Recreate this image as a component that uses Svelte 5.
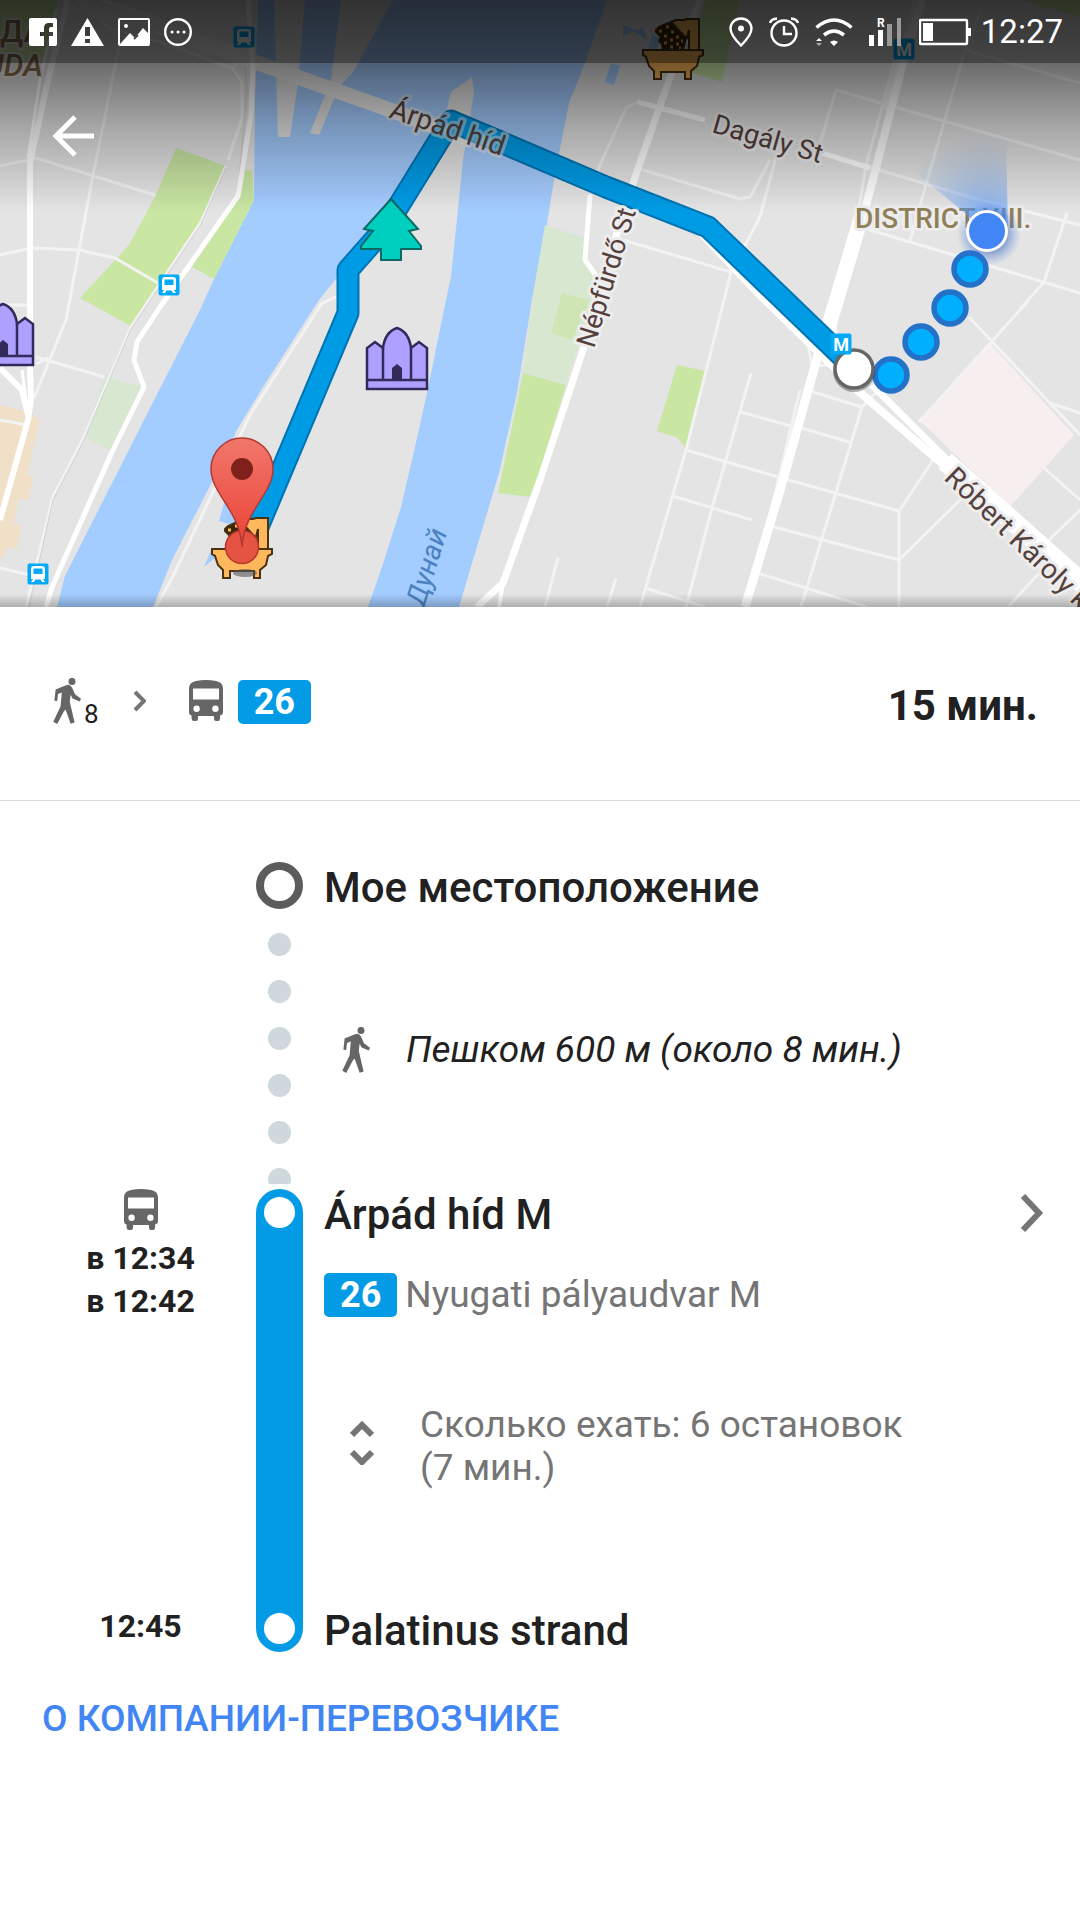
<script lang="ts">
  // Minor streets, drawn as thin pale lines.
  const streets = [
    'M0 166L28 160L36 158L155 195',
    'M119 47L92 180L66 320L34 398',
    'M0 255L31 248L79 250L115 258L158 283',
    'M0 305H30',
    'M36 357L104 377M36 364L48 358',
    'M0 420L26 425M0 568L30 575',
    'M226 166L201 222L131 327L84 437L53 497L26 607',
    'M64 12L78 4L110 28L160 42L232 68L240 62M232 68L242 82V118L228 160',
    'M85 0L125 22L180 36L246 60M100 0L150 16L210 40L250 56',
    'M336 297L322 303L250 415L172 578L156 607',
    'M585 260L590 197L599 167L626 108L638 102L705 120M822 153L970 197L1080 225',
    'M643 170L740 199L750 197L770 160',
    'M776 157L760 217L731 272L686 450L640 607',
    'M623 240L731 272',
    'M819 147L836 90L1080 160',
    'M981 10L965 50L910 240',
    'M965 50L1080 83',
    'M860 227L1080 293',
    'M915 0L885 110M895 60L866 165L858 215',
    'M1019 310L1044 282L1067 213',
    'M919 422L1029 300',
    'M969 317L1080 435',
    'M1050 403L1080 413',
    'M1044 468L1080 500M1046 543L1080 510',
    'M1039 573L1008 607',
    'M751 373L712 508L686 607',
    'M741 412L791 426M802 428L852 443',
    'M810 391L862 407L801 607M862 407L885 383',
    'M686 450L778 477L899 511V607M899 511L933 460',
    'M673 496L752 520',
    'M774 527L899 560L960 500',
    'M757 573L867 607M645 588L705 607',
    'M558 558L545 607M616 578L607 607',
    'M808 345L812 366L828 365M800 390L757 568'
  ];

  const route = 'M258 527L348 313V270L385 228L451 121L606 187L708 227L848 362';
  const walkDots = [[970, 269], [950, 308], [921, 342], [891, 375]];
  const stations = [[169, 285], [244, 37], [38, 574]];
  const castles = [[366, 327], [-28, 303]];
  const baths = [[642, 18], [211, 517]];

  let expanded = $state(false);
</script>

{#snippet walker()}
  <svg class="walker" viewBox="0 0 28 46" aria-hidden="true">
    <circle cx="19" cy="3.4" r="3.5" />
    <path d="M2.6 11.6L13 7.2Q17 5.9 19 9.4L22 16.3L28 20.8L26.8 23.6L19.6 20.4L17.6 16.8L16.8 24L21.6 44.6L17.6 45.8L12.6 31.5L10.8 33.4L4.2 46L0.3 43.8L7.6 28.2L8.8 14.4L5 15.9L4.2 23L1.4 22.8Z" />
  </svg>
{/snippet}

{#snippet bus()}
  <svg class="bus" viewBox="0 0 34 41" aria-hidden="true">
    <path fill-rule="evenodd" d="M0 9Q0 2 7 1Q17 -1 27 1Q34 2 34 9V32Q34 35 31 35.5V38.5Q31 41 29 41H27Q25 41 25 38.5V36H9V38.5Q9 41 7 41H5Q2.6 41 2.6 38.5V35.5Q0 35 0 32ZM4 8.5V19.5H30V8.5Z" />
    <circle class="lamp" cx="7.6" cy="28.8" r="3.2" />
    <circle class="lamp" cx="26.4" cy="28.8" r="3.2" />
  </svg>
{/snippet}

{#snippet metro(x: number, y: number)}
  <g transform="translate({x} {y})">
    <rect x="-10.5" y="-10.5" width="21" height="21" rx="2" fill="#00aaf8" />
    <text class="metro" y="7">M</text>
  </g>
{/snippet}

<main class="screen">
  <section class="map" aria-label="Карта">
    <svg class="canvas" viewBox="0 0 1080 607">
      <defs>
        <linearGradient id="shade" x1="0" y1="0" x2="0" y2="1">
          <stop offset="0" stop-color="#000" stop-opacity=".66" />
          <stop offset=".3" stop-color="#000" stop-opacity=".53" />
          <stop offset=".6" stop-color="#000" stop-opacity=".27" />
          <stop offset="1" stop-color="#000" stop-opacity="0" />
        </linearGradient>
        <linearGradient id="foot" x1="0" y1="0" x2="0" y2="1">
          <stop offset="0" stop-color="#000" stop-opacity="0" />
          <stop offset="1" stop-color="#000" stop-opacity=".24" />
        </linearGradient>
        <radialGradient id="beam" gradientUnits="userSpaceOnUse" cx="987" cy="231" r="96">
          <stop offset="0" stop-color="#4285f4" stop-opacity=".8" />
          <stop offset=".5" stop-color="#5f9cf4" stop-opacity=".38" />
          <stop offset="1" stop-color="#7fb0f4" stop-opacity="0" />
        </radialGradient>
        <radialGradient id="halo">
          <stop offset=".5" stop-color="#2a56a8" stop-opacity=".55" />
          <stop offset="1" stop-color="#4285f4" stop-opacity="0" />
        </radialGradient>
        <linearGradient id="pin" x1="0" y1="0" x2="0" y2="1">
          <stop offset="0" stop-color="#f2776c" />
          <stop offset="1" stop-color="#ea4335" />
        </linearGradient>
      </defs>

      <rect width="1080" height="607" fill="#e4e4e4" />

      <g fill="#a3ccff">
        <path d="M258 0L255 100L254 200L214 279L200 310L145 418L65 576L57 607H153L172 560L214 478L238 428L263 387L319 300L339 275L396 213L441 133L451 92L472 77L474 93L463 160L451 277L446 300L427 393L415 447L401 507L382 567L368 607H459L479 540L499 473L517 393L532 300L540 267L554 180L569 103L585 63L607 0Z" />
        <path d="M623 25L635 30L643 28L647 40L633 31L623 37ZM652 35L660 38L656 52L648 48ZM611 63L620 66L614 85L605 82ZM225 500L219 521L240 527ZM211 550L204 567L216 557Z" />
      </g>
      <path fill="#e4e4e4" d="M274 0L278 137H290L298 83L305 0ZM341 0L331 80L310 133L319 135L339 87L353 72L393 0Z" />

      <g fill="#c9e6a3">
        <path d="M0 0H58L45 63H0Z" />
        <path d="M176 148L226 166L201 220L160 287L131 326L80 298L129 245L156 195Z" />
        <path d="M243 169L252 171L254 200L214 279L192 267L238 196Z" />
        <path d="M523 373L566 385L540 470L530 497L498 493Z" />
        <path d="M705 0H740L722 82L690 72ZM1022 0H1080V17Z" />
        <path d="M677 365L706 371L686 449L678 438L657 431Z" />
      </g>
      <g fill="#d8e8d0">
        <path d="M105 377L144 387L112 452L84 437Z" />
        <path d="M545 225L583 237V262L600 278L566 384L523 373L532 300Z" />
      </g>
      <path fill="#cfe6b4" d="M562 293L590 300L572 340L551 333Z" />
      <path fill="#f0e0c8" d="M0 405L26 412L40 420L27 475L34 477L28 500L19 498L14 523L21 527L17 549L7 548L3 558H0Z" />
      <path fill="#f7eeef" d="M990 343L1074 435L1010 507L919 420Z" />

      <g fill="none" stroke="#f3f3f3" stroke-width="3" stroke-linejoin="round">
        {#each streets as d}<path {d} />{/each}
      </g>
      <path fill="none" stroke="#cfcfcf" d="M226 168L201 224L131 329L84 440L53 500L29 607M46 100L60 20M244 60L247 90L238 190" />
      <path fill="none" stroke="#ececec" stroke-width="15" d="M75 5L160 28L255 62L396 112L470 140" />
      <g fill="none" stroke="#fff" stroke-linejoin="round">
        <path stroke-width="6" d="M68 0L48 80L30 163V370L31 400L28 420L0 520M0 368L22 390L28 415" />
        <path stroke-width="3" d="M56 10L40 80L28 158M22 370L28 415" />
        <path stroke-width="5" d="M248 0L253 67L251 115L240 185L238 196L158 310L137 342L134 360L144 387L112 452L52 587L46 607" />
        <path stroke-width="7" d="M700 0L669 80L633 183L617 233L583 350L540 480L503 583L477 607" />
        <path stroke-width="4" d="M503 583L499 607" />
        <path stroke-width="5" d="M590 195L585 260L597 277M638 102L660 108L705 120M822 153L870 168" />
        <path stroke-width="8" d="M922 0L902 67L871 187L858 235" />
        <path stroke-width="15" d="M862 215L829 325L832 350" />
        <path stroke-width="9" d="M818 355L781 487L745 607" />
        <path stroke-width="8" d="M700 232L760 295L856 389L955 475" />
        <path stroke-width="7" d="M872 385L960 473" />
        <path stroke-width="20" d="M945 461L1090 590" />
      </g>

      <g fill="none" stroke-linejoin="round">
        <path stroke="#0074b3" stroke-width="23" d={route} />
        <path stroke="#009be5" stroke-width="19" d={route} />
      </g>

      <g class="labels">
        <text class="area" x="0" y="42">ДА</text>
        <text class="area slant" x="-16" y="76">UDA</text>
        <text class="translucent" transform="translate(388 117) rotate(19)">Árpád híd</text>
        <text class="street" transform="translate(711 132) rotate(16)">Dagály St</text>
        <text class="street" transform="translate(594 349) rotate(-73)">Népfürdő St</text>
        <text transform="translate(943 479) rotate(44)">Róbert Károly krt</text>
        <text class="district" x="855" y="228">DISTRICT XIII.</text>
        <text class="river" transform="translate(424 608) rotate(-73)">Дунай</text>
      </g>

      {#each stations as [x, y]}
        <g transform="translate({x} {y})">
          <rect x="-10.5" y="-10.5" width="21" height="21" rx="2" fill="#00aaf8" />
          <path fill="#fff" fill-rule="evenodd" d="M-7 -5Q-7 -8 -4 -8H4Q7 -8 7 -5V5H5L7 8H4L2.5 5.5H-2.5L-4 8H-7L-5 5H-7ZM-4.500 -5.500V0H4.500V-5.500Z" />
        </g>
      {/each}
      {@render metro(904, 49)}

      <path transform="translate(360 198)" fill="#00cfc0" stroke="#0a6a62" stroke-width="2" d="M31 1L58 31L49 33L61 48V51H41V62H21V51H1V48L13 33L4 31Z" />

      {#each castles as [x, y]}
        <g transform="translate({x} {y})" stroke="#33295a" stroke-width="2.5">
          <path fill="#aea0ff" d="M1 62V21L9 15L17 21Q19 5 31 1Q43 5 45 21L53 15L61 21V62Z" />
          <path fill="none" d="M1 53H61M17 21V53M45 21V53" />
          <path fill="#33295a" stroke="none" d="M26 53V41L31 37L36 41V53Z" />
        </g>
      {/each}

      {#each baths as [x, y]}
        <g transform="translate({x} {y})" stroke="#4a3210" stroke-width="2" fill="#ffb95c">
          <path d="M29 4L34 2H42L45 1H57V33H47V12L45 20L38 16Z" />
          <path d="M14 12L17 9L26 5L31 6L44 20L41 32H21L20 26L17 23L19 19L14 14Z" fill="#3b2708" />
          <path d="M17 13h3M24 9h3M22 18h3M29 14h3M22 25h3M28 22h3M34 19h3M28 29h3M34 26h3M39 23h2M37 30h2" stroke="#ffb95c" stroke-width="3" />
          <path d="M1 32H61V37L57 39L55 48L49 53V61H43V54H19V61H12V53L7 48L4 39L1 37Z" />
        </g>
      {/each}

      <ellipse cx="245" cy="573" rx="12" ry="4" fill="#555" opacity=".6" />
      <circle cx="242" cy="547" r="16.5" fill="#e55343" stroke="#b8352b" stroke-width="1.5" />
      <path fill="url(#pin)" stroke="#b23a31" stroke-width="1.5" d="M242 547C240 510 211 494 211 469A31 31 0 0 1 273 469C273 494 244 510 242 547Z" />
      <circle cx="242" cy="469" r="11" fill="#80201a" />

      <path fill="url(#beam)" d="M987 231L900 160L930 128L1006 130L1008 231Z" />
      <g fill="#00b0ff" stroke="#2471c8" stroke-width="5.5">
        {#each walkDots as [cx, cy]}<circle {cx} {cy} r="16" />{/each}
      </g>
      <circle cx="989" cy="234" r="32" fill="url(#halo)" />
      <circle cx="987" cy="231" r="19.500" fill="#4285f4" stroke="#fff" stroke-width="3" />
      <circle cx="854" cy="371" r="21" fill="#000" opacity=".3" />
      <circle cx="854" cy="369" r="19" fill="#fff" stroke="#666" stroke-width="3.500" />
      {@render metro(841, 344)}

      <rect width="1080" height="212" fill="url(#shade)" />
      <rect y="594" width="1080" height="13" fill="url(#foot)" />
    </svg>

    <header class="overlay">
      <div class="status">
        <div class="tray">
          <svg viewBox="0 0 28 28" width="28" height="28" aria-hidden="true">
            <path fill="#fff" fill-rule="evenodd" d="M2 0H26Q28 0 28 2V26Q28 28 26 28H20V18H24V14H20V11Q20 9 22 9H24V5H20Q15 5 15 10V14H11V18H15V28H2Q0 28 0 26V2Q0 0 2 0Z" />
          </svg>
          <svg viewBox="0 0 33 28" width="33" height="28" aria-hidden="true">
            <path fill="#fff" fill-rule="evenodd" d="M16.500 0L33 28H0ZM14 9V18H19V9ZM14 21V25H19V21Z" />
          </svg>
          <svg viewBox="0 0 32 28" width="32" height="28" aria-hidden="true">
            <rect x="1" y="1" width="30" height="26" rx="1" fill="none" stroke="#fff" stroke-width="2" />
            <path fill="#fff" d="M2 26L12 15L17 20L25 10L31 16V27H2Z" />
            <path stroke="#4a4a4a" stroke-width="2" d="M16 21L20 17" />
            <circle cx="8" cy="8" r="2" fill="#fff" />
          </svg>
          <svg viewBox="0 0 28 28" width="28" height="28" aria-hidden="true">
            <circle cx="14" cy="14" r="12.800" fill="none" stroke="#fff" stroke-width="2.400" />
            <path stroke="#fff" stroke-width="3" stroke-linecap="round" d="M8 14h.1M14 14h.1M20 14h.1" />
          </svg>
        </div>
        <div class="tray system">
          <svg viewBox="0 0 24 30" width="24" height="30" aria-hidden="true">
            <path fill="none" stroke="#fff" stroke-width="2.400" d="M12 28.500Q1.500 18 1.500 11.500A10.500 10 0 0 1 22.500 11.500Q22.500 18 12 28.500Z" />
            <circle cx="12" cy="11.500" r="3" fill="#fff" />
          </svg>
          <svg viewBox="0 0 30 30" width="30" height="30" aria-hidden="true">
            <g fill="none" stroke="#fff" stroke-width="2.400">
              <circle cx="15" cy="16" r="12.500" />
              <path d="M15 9V17H23M1 6Q2 2 8 1.500M29 6Q28 2 22 1.500" />
            </g>
          </svg>
          <svg viewBox="0 0 38 28" width="38" height="28" aria-hidden="true">
            <path fill="none" stroke="#fff" stroke-width="3.600" d="M1.500 9.500Q19 -5.500 36.500 9.500M9 17Q19 9 29 17" />
            <path fill="#fff" d="M15 24Q19 21 23 24L19 28ZM1 23L4 20L7 23Z" />
            <path fill="#aaa" d="M1 25L4 28L7 25Z" />
          </svg>
          <svg viewBox="0 0 34 28" width="34" height="28" aria-hidden="true">
            <path fill="#fff" d="M0 17H5V28H0ZM9 12H14V28H9Z" />
            <path fill="#999" d="M18 6H23V28H18ZM28 0H32V28H28Z" />
            <text class="roaming" x="8" y="9">R</text>
          </svg>
          <svg viewBox="0 0 52 28" width="52" height="28" aria-hidden="true">
            <rect x="1" y="2" width="47" height="24" rx="1" fill="none" stroke="#fff" stroke-width="2.400" />
            <path fill="#fff" d="M4 5H14V23H4ZM49 10H52V18H49Z" />
          </svg>
        </div>
        <time class="clock">12:27</time>
      </div>
      <button class="back" aria-label="Назад">
        <svg viewBox="0 0 42 42" width="42" height="42" aria-hidden="true">
          <path fill="none" stroke="#fff" stroke-width="5" d="M42 21H4M23 2L4 21L23 40" />
        </svg>
      </button>
    </header>
  </section>

  <section class="summary">
    {@render walker()}
    <span class="minutes">8</span>
    <svg class="next" viewBox="0 0 13 22" aria-hidden="true"><path d="M2 2L11 11L2 20" /></svg>
    {@render bus()}
    <span class="badge">26</span>
    <strong class="total">15 мин.</strong>
  </section>

  <ol class="steps">
    <li class="step">
      <div class="times"></div>
      <div class="rail"><span class="origin"></span></div>
      <h2 class="place">Мое местоположение</h2>
    </li>
    <li class="step walk">
      <div class="times"></div>
      <div class="rail dotted"></div>
      <p class="walk-info">{@render walker()}<em>Пешком 600 м (около 8 мин.)</em></p>
    </li>
    <li class="step">
      <div class="times">
        {@render bus()}
        <time>в 12:34</time>
        <time>в 12:42</time>
      </div>
      <div class="rail line first"><span class="stop"></span></div>
      <div class="ride">
        <div class="place-row">
          <h2 class="place">Árpád híd M</h2>
          <button class="open" aria-label="Открыть остановку">
            <svg viewBox="0 0 24 40" width="24" height="40" aria-hidden="true"><path d="M3 3L19 20L3 37" /></svg>
          </button>
        </div>
        <p class="direction"><span class="badge">26</span>Nyugati pályaudvar M</p>
        <button class="expand" aria-expanded={expanded} onclick={() => (expanded = !expanded)}>
          <svg viewBox="0 0 24 44" width="24" height="44" aria-hidden="true"><path d="M2 14L12 4L22 14M2 31L12 41L22 31" /></svg>
          <span>Сколько ехать: 6 остановок (7&nbsp;мин.)</span>
        </button>
      </div>
    </li>
    <li class="step">
      <div class="times"><time>12:45</time></div>
      <div class="rail line last"><span class="stop"></span></div>
      <h2 class="place">Palatinus strand</h2>
    </li>
  </ol>

  <a class="agency" href="#agency">О КОМПАНИИ-ПЕРЕВОЗЧИКЕ</a>
</main>

<style>
  :global(body) {
    margin: 0;
    background: #fff;
  }
  .screen {
    min-height: 100vh;
    background: #fff;
    color: #212121;
    font-family: Roboto, 'Noto Sans', sans-serif;
  }
  button {
    padding: 0;
    border: 0;
    background: none;
    color: inherit;
    font: inherit;
    text-align: left;
    cursor: pointer;
  }
  svg {
    flex: none;
  }

  .map {
    position: relative;
  }
  .canvas {
    display: block;
    width: 100%;
    height: auto;
  }
  .labels text {
    fill: #54403c;
    stroke: #ededed;
    stroke-width: 6px;
    stroke-linejoin: round;
    paint-order: stroke;
    font-size: 28px;
  }
  .labels .street {
    font-size: 27px;
  }
  .labels .translucent {
    stroke: rgba(229, 229, 229, 0.55);
  }
  .labels .area {
    fill: #8b6f4c;
    stroke-width: 4px;
    font-size: 31px;
    font-weight: 500;
  }
  .labels .slant {
    font-style: italic;
  }
  .labels .district {
    fill: #90805a;
    font-weight: 500;
  }
  .labels .river {
    fill: #4d80c0;
    stroke: none;
    font-style: italic;
  }
  .metro {
    fill: #fff;
    font-size: 18px;
    font-weight: 700;
    text-anchor: middle;
  }
  .roaming {
    fill: #fff;
    font-size: 12px;
    font-weight: 700;
  }

  .overlay {
    position: absolute;
    inset: 0 0 auto;
  }
  .status {
    display: flex;
    align-items: center;
    gap: 10px;
    height: 63px;
    padding: 0 17px 0 29px;
    background: rgba(0, 0, 0, 0.35);
    color: #fff;
  }
  .tray {
    display: flex;
    align-items: center;
    gap: 14px;
  }
  .system {
    gap: 16px;
    margin-left: auto;
  }
  .clock {
    font-size: 33px;
  }
  .back {
    display: block;
    margin: 40px 0 0 28px;
    padding: 12px 24px;
  }
  .back svg {
    display: block;
  }

  .walker {
    width: 28px;
    height: 46px;
    fill: #666;
  }
  .bus {
    width: 34px;
    height: 41px;
    fill: #666;
  }
  .lamp {
    fill: #fff;
  }
  .badge {
    display: inline-block;
    box-sizing: border-box;
    min-width: 73px;
    padding: 0 16px;
    border-radius: 5px;
    background: #039be5;
    color: #fff;
    font-size: 36px;
    font-weight: 700;
    line-height: 44px;
    text-align: center;
  }

  .summary {
    display: flex;
    align-items: center;
    box-sizing: border-box;
    height: 194px;
    padding: 0 42px 6px 53px;
    border-bottom: 1px solid #dadada;
  }
  .minutes {
    margin: 26px 34px 0 3px;
    font-size: 26px;
  }
  .next {
    width: 13px;
    height: 22px;
    margin-right: 43px;
    fill: none;
    stroke: #757575;
    stroke-width: 4px;
  }
  .summary .badge {
    margin: 3px 0 0 15px;
  }
  .total {
    margin: 10px 0 0 auto;
    font-size: 42px;
    font-weight: 700;
  }

  .steps {
    margin: 0;
    padding: 61px 0 0;
    list-style: none;
  }
  .step {
    display: grid;
    grid-template-columns: 256px 47px 1fr;
  }
  .times {
    display: flex;
    flex-direction: column;
    align-items: center;
    padding-left: 25px;
    font-size: 32px;
    font-weight: 700;
    line-height: 43px;
  }
  .times .bus {
    margin-bottom: 7px;
  }
  .origin {
    display: block;
    box-sizing: border-box;
    height: 47px;
    border: 8px solid #5c5c5c;
    border-radius: 50%;
  }
  .place {
    margin: 0;
    padding-left: 21px;
    font-size: 42px;
    font-weight: 500;
    line-height: 52px;
  }
  .walk {
    height: 275px;
  }
  .dotted {
    margin: 7px 0 5px;
    background: radial-gradient(circle, #cfd8dc 11px, transparent 12px) 0 0 / 47px 47px repeat-y;
  }
  .walk-info {
    display: flex;
    align-items: center;
    gap: 36px;
    margin: 0;
    padding: 0 0 4px 39px;
    font-size: 37px;
  }
  .line {
    display: flex;
    justify-content: center;
    background: #039be5;
  }
  .first {
    border-radius: 24px 24px 0 0;
  }
  .last {
    height: 47px;
    border-radius: 0 0 24px 24px;
  }
  .stop {
    width: 31px;
    height: 31px;
    margin-top: 8px;
    border-radius: 50%;
    background: #fff;
  }
  .ride {
    padding-bottom: 116px;
  }
  .place-row {
    display: flex;
    justify-content: space-between;
    padding-right: 36px;
  }
  .open {
    align-self: flex-start;
    padding-top: 4px;
  }
  .open svg,
  .expand svg {
    display: block;
    fill: none;
    stroke: #757575;
    stroke-width: 6px;
  }
  .direction {
    display: flex;
    gap: 8px;
    margin: 32px 0 0;
    padding-left: 21px;
    color: #757575;
    font-size: 37px;
    line-height: 44px;
  }
  .expand {
    display: flex;
    align-items: center;
    gap: 46px;
    width: 100%;
    max-width: 640px;
    margin-top: 86px;
    padding-left: 47px;
    color: #757575;
    font-size: 37px;
    line-height: 43px;
  }
  .expand svg {
    margin-bottom: 6px;
  }
  .agency {
    display: inline-block;
    margin: 40px 42px;
    color: #4285f4;
    font-size: 37px;
    font-weight: 500;
    line-height: 44px;
    text-decoration: none;
  }
</style>
